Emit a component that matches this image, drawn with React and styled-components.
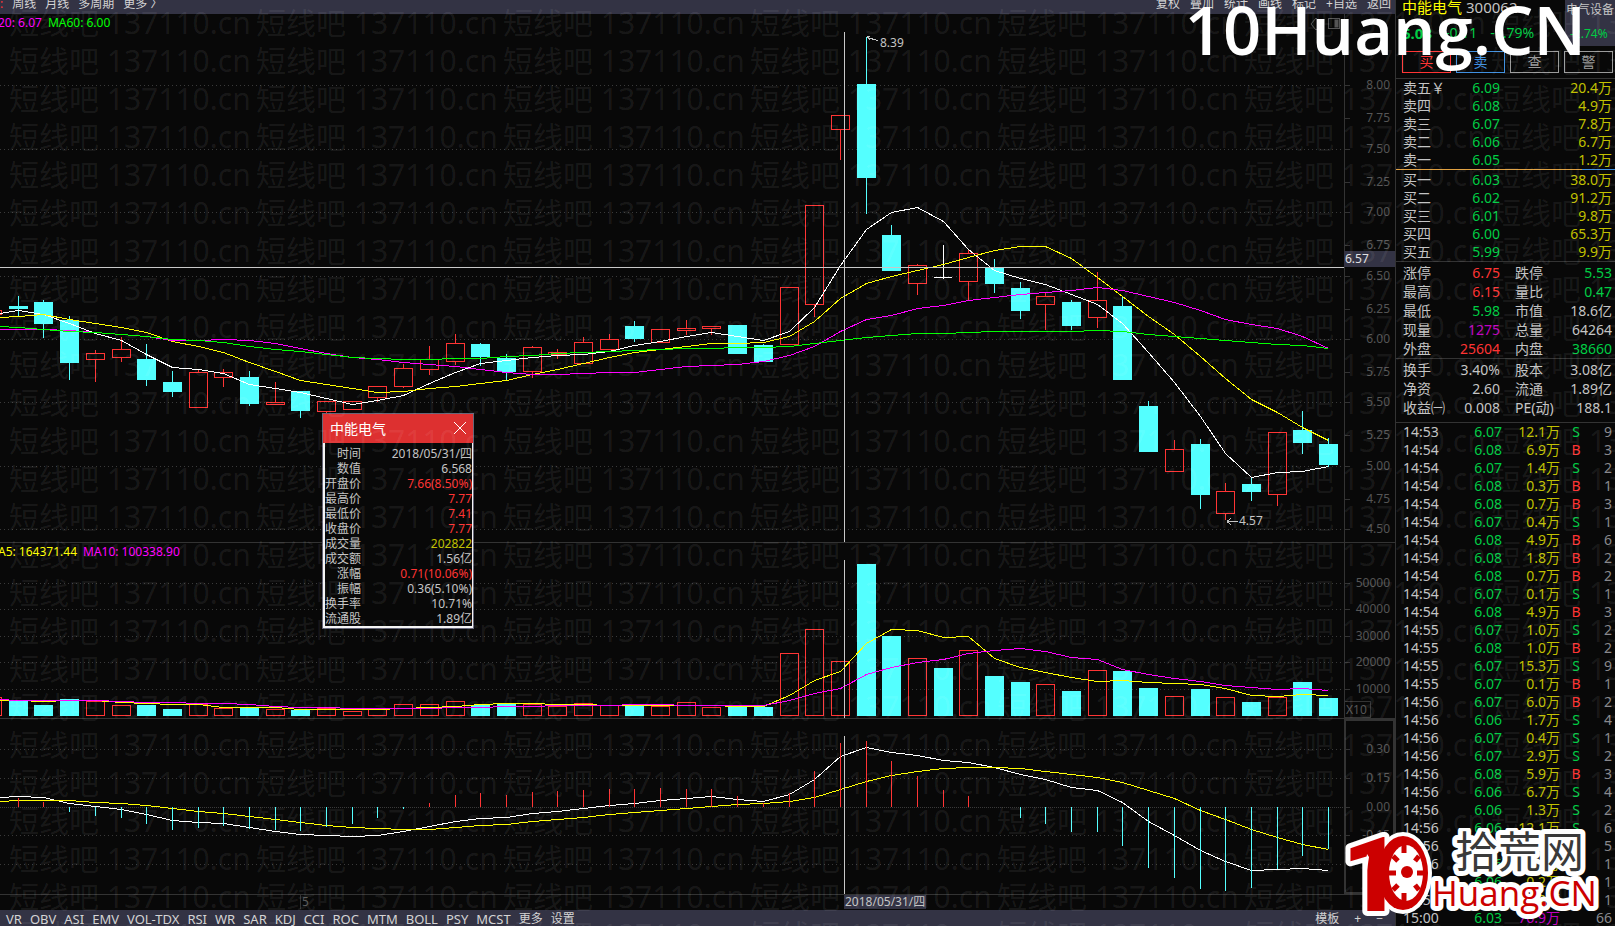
import React from 'react'
import styled, { createGlobalStyle } from 'styled-components'

const GlobalStyle = createGlobalStyle`
  * {
    box-sizing: border-box;
  }

  body {
    margin: 0;
    background: #080808;
    color: #c4c4c4;
    font-family: "Noto Sans", "Noto Sans CJK SC", sans-serif;
    font-size: 12px;
    overflow: hidden;
  }

  button {
    font-family: inherit;
    cursor: pointer;
  }
`;

const UP = '#ff3434';
const DOWN = '#54ffff';
const GREEN = '#00cc44';
const GOLD = '#c0c000';
const LINE = '#333333';

const TONES = {
  up: '#ff3434',
  down: GREEN,
  gold: GOLD,
  purple: '#c000c0',
  dim: '#88888c',
};

// ---------- chart data ----------

// kind, high, body top, body bottom, low
const CANDLES = [
  ['d', 296, 306, 309, 316], ['d', 300, 302, 324, 338], ['d', 316, 320, 363, 380], ['u', 350, 353, 360, 382],
  ['u', 337, 349, 358, 362], ['d', 344, 359, 380, 386], ['d', 371, 382, 392, 397], ['u', 369, 372, 408, 408],
  ['u', 369, 372, 378, 387], ['d', 371, 377, 404, 406], ['u', 382, 402, 405, 405], ['d', 391, 391, 411, 418],
  ['u', 401, 401, 412, 413], ['u', 401, 401, 410, 410], ['u', 386, 386, 398, 402], ['u', 364, 368, 387, 388],
  ['u', 346, 359, 370, 375], ['u', 334, 343, 362, 365], ['d', 343, 344, 357, 366], ['d', 354, 358, 372, 380],
  ['u', 346, 347, 372, 378], ['u', 349, 352, 355, 359], ['u', 337, 342, 364, 364], ['u', 334, 339, 350, 350],
  ['d', 321, 326, 339, 342], ['u', 329, 329, 343, 343], ['u', 320, 328, 331, 335], ['u', 326, 326, 329, 335],
  ['d', 325, 325, 354, 354], ['d', 344, 345, 362, 362], ['u', 287, 287, 345, 345], ['u', 205, 205, 305, 317],
  ['u', 115, 115, 130, 160], ['d', 37, 84, 178, 214], ['d', 225, 235, 271, 271], ['u', 264, 265, 284, 295],
  ['x', 245, 277, 278, 279], ['u', 250, 253, 282, 301], ['d', 259, 268, 284, 293], ['d', 282, 288, 311, 319],
  ['u', 293, 296, 305, 330], ['d', 300, 302, 326, 330], ['u', 272, 300, 318, 328], ['d', 296, 306, 380, 380],
  ['d', 401, 406, 452, 452], ['u', 440, 449, 472, 472], ['d', 439, 444, 495, 509], ['u', 483, 491, 514, 520],
  ['d', 478, 484, 492, 501], ['u', 432, 432, 495, 506], ['d', 411, 430, 443, 454], ['d', 438, 444, 465, 467],
];

const MA5 = [310, 314, 323, 333, 340, 354, 367, 369, 373, 384, 388, 392, 398, 404, 400, 395, 383, 372, 363, 360, 357, 355, 354, 351, 345, 341, 336, 332, 336, 340, 331, 307, 265, 229, 212, 207, 221, 249, 270, 278, 284, 294, 304, 323, 352, 382, 416, 453, 477, 472, 471, 466];
const MA10 = [316, 314, 319, 323, 327, 332, 341, 346, 352, 362, 371, 380, 384, 388, 392, 391, 388, 386, 383, 380, 374, 369, 363, 357, 352, 349, 346, 343, 343, 342, 336, 321, 298, 283, 276, 270, 264, 257, 250, 246, 246, 258, 277, 296, 316, 334, 356, 378, 399, 412, 427, 440];
const MA20 = [329, 329, 330, 332, 334, 336, 340, 340, 339, 340, 343, 348, 353, 357, 359, 362, 364, 366, 369, 372, 374, 374, 373, 372, 372, 369, 366, 365, 364, 361, 355, 346, 331, 319, 315, 308, 305, 300, 297, 294, 292, 290, 287, 290, 296, 302, 310, 319, 324, 328, 336, 348];
const MA60 = [327, 329, 331, 332, 334, 336, 339, 340, 342, 346, 349, 351, 354, 357, 358, 359, 359, 358, 358, 356, 355, 353, 352, 351, 350, 349, 348, 348, 347, 347, 346, 343, 340, 337, 335, 333, 333, 332, 331, 331, 331, 331, 330, 331, 334, 336, 338, 340, 342, 344, 345, 348];

const VOLUMES = [700, 705, 699, 701, 705, 705, 709, 704, 708, 707, 709, 710, 708, 711, 709, 704, 704, 701, 705, 704, 704, 706, 703, 705, 705, 706, 702, 707, 707, 707, 653, 629, 661, 564, 636, 658, 668, 650, 676, 682, 684, 691, 670, 671, 688, 696, 689, 697, 702, 697, 682, 698];
const VOL5 = [700, 701, 700, 700, 702, 703, 704, 704, 707, 707, 707, 709, 709, 709, 709, 708, 707, 706, 704, 703, 703, 704, 704, 705, 705, 705, 705, 705, 706, 706, 695, 680, 671, 643, 629, 630, 637, 636, 658, 667, 672, 677, 681, 680, 682, 683, 684, 688, 695, 696, 694, 695];
const VOL10 = [700, 700, 700, 700, 701, 702, 702, 703, 703, 704, 706, 707, 707, 708, 708, 708, 708, 707, 707, 706, 706, 705, 705, 705, 704, 704, 705, 705, 705, 705, 700, 693, 688, 674, 667, 662, 659, 653, 650, 648, 651, 657, 659, 669, 674, 678, 681, 685, 687, 689, 688, 690];

const MACD_ZERO = 807;
const MACD = [798, 802, 812, 816, 818, 824, 830, 828, 826, 829, 830, 831, 827, 824, 818, 809, 803, 795, 793, 795, 792, 791, 790, 789, 789, 788, 789, 789, 796, 803, 793, 771, 743, 741, 761, 776, 790, 796, 807, 818, 824, 832, 832, 846, 868, 878, 889, 891, 888, 869, 856, 849];
const DIF = [796, 797, 803, 806, 809, 814, 820, 822, 823, 827, 831, 834, 835, 836, 835, 831, 826, 821, 818, 817, 813, 811, 808, 805, 803, 800, 798, 796, 799, 801, 794, 779, 756, 747, 752, 755, 760, 762, 767, 774, 779, 787, 790, 802, 821, 835, 850, 861, 870, 869, 868, 870];
const DEA = [800, 800, 800, 802, 803, 805, 808, 811, 813, 816, 819, 822, 825, 827, 828, 829, 829, 827, 825, 824, 821, 819, 817, 814, 812, 810, 808, 806, 804, 803, 801, 797, 789, 781, 775, 771, 768, 767, 767, 768, 771, 774, 777, 782, 790, 798, 810, 819, 829, 837, 844, 849];

const PRICE = {
  top: 14, height: 529, grid: [85, 149, 212, 276, 339, 402, 466, 529],
  labels: [['8.00', 85], ['7.75', 118], ['7.50', 149], ['7.25', 182], ['7.00', 212], ['6.75', 245], ['6.50', 276], ['6.25', 309], ['6.00', 339], ['5.75', 372], ['5.50', 402], ['5.25', 435], ['5.00', 466], ['4.75', 499], ['4.50', 529]],
};
const VOLUME = {
  top: 543, height: 176, grid: [583, 609, 636, 662, 689],
  labels: [['50000', 583], ['40000', 609], ['30000', 636], ['20000', 662], ['10000', 689]],
};
const OSC = {
  top: 719, height: 176, grid: [749, 778, 835, 864],
  labels: [['0.30', 749], ['0.15', 778], ['0.00', 807], ['-0.15', 835]],
};

const CROSS_X = 844;
const xAt = (i) => Math.floor(18.3 + 25.69 * i);

// ---------- quote data ----------

const SELLS = [['卖五￥', '6.09', '20.4万'], ['卖四', '6.08', '4.9万'], ['卖三', '6.07', '7.8万'], ['卖二', '6.06', '6.7万'], ['卖一', '6.05', '1.2万']];
const BUYS = [['买一', '6.03', '38.0万'], ['买二', '6.02', '91.2万'], ['买三', '6.01', '9.8万'], ['买四', '6.00', '65.3万'], ['买五', '5.99', '9.9万']];

const STATS = [
  ['涨停', '6.75', 'up', '跌停', '5.53', 'down'],
  ['最高', '6.15', 'up', '量比', '0.47', 'down'],
  ['最低', '5.98', 'down', '市值', '18.6亿'],
  ['现量', '1275', 'purple', '总量', '64264'],
  ['外盘', '25604', 'up', '内盘', '38660', 'down'],
];
const FUNDAMENTALS = [
  ['换手', '3.40%', '', '股本', '3.08亿'],
  ['净资', '2.60', '', '流通', '1.89亿'],
  ['收益㈠', '0.008', '', 'PE(动)', '188.1'],
];

const TICKS = [
  ['14:53', '6.07', '12.1', 'S', 9], ['14:54', '6.08', '6.9', 'B', 3], ['14:54', '6.07', '1.4', 'S', 2],
  ['14:54', '6.08', '0.3', 'B', 1], ['14:54', '6.08', '0.7', 'B', 3], ['14:54', '6.07', '0.4', 'S', 1],
  ['14:54', '6.08', '4.9', 'B', 6], ['14:54', '6.08', '1.8', 'B', 2], ['14:54', '6.08', '0.7', 'B', 2],
  ['14:54', '6.07', '0.1', 'S', 1], ['14:54', '6.08', '4.9', 'B', 3], ['14:55', '6.07', '1.0', 'S', 2],
  ['14:55', '6.08', '1.0', 'B', 2], ['14:55', '6.07', '15.3', 'S', 9], ['14:55', '6.07', '0.1', 'B', 1],
  ['14:56', '6.07', '6.0', 'B', 2], ['14:56', '6.06', '1.7', 'S', 4], ['14:56', '6.07', '0.4', 'S', 1],
  ['14:56', '6.07', '2.9', 'S', 2], ['14:56', '6.08', '5.9', 'B', 3], ['14:56', '6.06', '6.7', 'S', 4],
  ['14:56', '6.06', '1.3', 'S', 2], ['14:56', '6.06', '12.1', 'S', 6], ['14:56', '6.06', '1.2', 'S', 5],
  ['14:56', '6.06', '0.1', 'S', 1], ['14:56', '6.06', '0.2', 'S', 1], ['14:56', '6.06', '0.2', 'S', 1],
  ['15:00', '6.03', '76.9', '', 66],
];

const DETAILS = [
  ['时间', '2018/05/31/四'], ['数值', '6.568'], ['开盘价', '7.66(8.50%)', 'up'], ['最高价', '7.77', 'up'],
  ['最低价', '7.41', 'up'], ['收盘价', '7.77', 'up'], ['成交量', '202822', 'gold'], ['成交额', '1.56亿'],
  ['涨幅', '0.71(10.06%)', 'up'], ['振幅', '0.36(5.10%)'], ['换手率', '10.71%'], ['流通股', '1.89亿'],
];

const INDICATORS = ['VR', 'OBV', 'ASI', 'EMV', 'VOL-TDX', 'RSI', 'WR', 'SAR', 'KDJ', 'CCI', 'ROC', 'MTM', 'BOLL', 'PSY', 'MCST'];

// ---------- layout ----------

const Screen = styled.div`
  position: relative;
  display: grid;
  grid-template-columns: minmax(0, 1fr) 220px;
  height: 100vh;
  overflow: hidden;
`;

const ChartSide = styled.main`
  position: relative;
  display: grid;
  grid-template-rows: 14px minmax(0, 529fr) minmax(0, 176fr) minmax(0, 176fr) 15px 16px;
`;

const Bar = styled.nav`
  display: flex;
  justify-content: space-between;
  background: #333344;
  padding: ${(p) => (p.$top ? '0 4px 0 0' : '0 12px 0 6px')};
`;

const BarGroup = styled.div`
  display: flex;
  gap: ${(p) => p.$gap || 8}px;
`;

const BarButton = styled.button`
  background: transparent;
  border: none;
  padding: 0;
  font-size: ${(p) => (p.$latin ? 13 : 12)}px;
  line-height: ${(p) => (p.$top ? 8 : 18)}px;
  height: ${(p) => (p.$top ? 8 : 18)}px;
  color: ${(p) => (p.$active ? UP : '#d4d4d4')};
  white-space: nowrap;
`;

const Panel = styled.section`
  position: relative;
  display: grid;
  grid-template-columns: minmax(0, 1fr) 51px;
  border-bottom: 1px solid ${LINE};
`;

const Plot = styled.svg`
  display: block;
  width: 100%;
  height: 100%;
  shape-rendering: crispEdges;
`;

const Axis = styled.div`
  position: relative;
  box-shadow: ${(p) => (p.$boxed ? `inset 0 0 0 2px ${LINE}` : `inset 1px 0 0 ${LINE}`)};
`;

const AxisLabel = styled.span`
  position: absolute;
  right: 5px;
  transform: translateY(-50%);
  line-height: 16px;
  color: #555555;
`;

const AxisTick = styled.span`
  position: absolute;
  left: 1px;
  width: 5px;
  border-top: 1px solid ${LINE};
`;

const Unit = styled.span`
  position: absolute;
  left: 0;
  bottom: 0;
  width: 27px;
  border: 1px solid ${LINE};
  border-left: none;
  line-height: 15px;
  padding-left: 2px;
  color: #555555;
`;

const Legend = styled.div`
  position: absolute;
  top: 0;
  left: -2px;
  display: flex;
  gap: 6px;
  line-height: 17px;
`;

const LegendItem = styled.span`
  color: ${(p) => p.$color};
`;

const Callout = styled.span`
  position: absolute;
  line-height: 16px;
  transform: translateY(-50%);
`;

const CrossPrice = styled.span`
  position: absolute;
  left: 0;
  right: 0;
  transform: translateY(-100%);
  background: #333344;
  padding-left: 1px;
  line-height: 16px;
  color: #e0e0e0;
`;

const DateAxis = styled.div`
  position: relative;
  margin-right: 51px;
`;

const DateMark = styled.span`
  position: absolute;
  top: 0;
  border-left: 1px solid ${LINE};
  padding-left: 1px;
  line-height: 14px;
  color: #555555;
`;

const CrossDate = styled.span`
  position: absolute;
  top: 0;
  padding: 0 1px;
  background: #333344;
  line-height: 14px;
`;

const ToolIcons = styled.svg`
  position: absolute;
  top: 3px;
  right: 53px;
`;

// ---------- floating detail window ----------

const Popup = styled.aside`
  position: absolute;
  left: 322px;
  top: 413px;
  width: 152px;
  border: 1px solid #666678;
  background: #080808;
`;

const PopupHead = styled.header`
  display: flex;
  align-items: center;
  justify-content: space-between;
  height: 29px;
  padding: 0 7px 2px;
  background: #dd3030;
  color: #ffffff;
  font-size: 14px;
`;

const CloseButton = styled.button`
  display: flex;
  background: transparent;
  border: none;
  padding: 0;
`;

const DetailTable = styled.table`
  width: 100%;
  border-spacing: 0;
  border: 2px solid #f4f4f4;
  border-width: 0 1px 2px 2px;
  padding-top: 3px;

  th, td {
    height: 15px;
    padding: 0;
    line-height: 15px;
    text-align: right;
    font-weight: 400;
    white-space: nowrap;
  }

  th {
    width: 36px;
  }
`;

const Value = styled.td`
  color: ${(p) => TONES[p.$tone] || '#c4c4c4'};
`;

// ---------- quote panel ----------

const Quote = styled.aside`
  display: flex;
  flex-direction: column;
  min-height: 0;
  border-left: 1px solid ${LINE};
  font-size: 14px;
`;

const QuoteHead = styled.header`
  display: flex;
  justify-content: space-between;
  height: 46px;
  padding-left: 6px;
  white-space: nowrap;
`;

const NameRow = styled.div`
  display: flex;
  gap: 4px;
  font-size: 15px;
  line-height: 14px;
  height: 24px;
`;

const Name = styled.span`
  color: #ffff00;
`;

const PriceRow = styled.div`
  display: flex;
  gap: 13px;
  line-height: 18px;
  color: ${GREEN};
`;

const Last = styled.strong`
  font-size: 15px;
`;

const Sector = styled.div`
  width: 50px;
  padding-left: 1px;
  background: #333344;
  font-size: 12px;
  line-height: 20px;
`;

const SectorChange = styled.div`
  padding: 4px 4px 0;
  color: ${GREEN};
`;

const Actions = styled.div`
  display: grid;
  grid-template-columns: repeat(4, 1fr);
  gap: 5px;
  padding: 5px 2px 5px 6px;
  border-bottom: 1px solid ${LINE};
`;

const Action = styled.button`
  height: 22px;
  padding: 0;
  background: transparent;
  border: 1px solid ${(p) => p.$color};
  color: ${(p) => p.$color};
  font-size: 14px;
  line-height: 20px;
`;

const Split = styled.div`
  flex: none;
  height: 1px;
  margin-bottom: 1px;
  background: linear-gradient(to right, #e0a040 85%, #4090e0 85%);
`;

const Block = styled.div`
  flex: ${(p) => (p.$fill ? '1 1 0' : 'none')};
  min-height: 0;
  overflow: hidden;
  padding: 0 3px 0 7px;
  border-bottom: ${(p) => (p.$rule ? `1px solid ${LINE}` : 'none')};
`;

const StatBlock = styled(Block)`
  padding-top: 1px;
  padding-bottom: ${(p) => (p.$last ? 5 : 0)}px;
`;

const DataTable = styled.table`
  width: 100%;
  table-layout: fixed;
  border-spacing: 0;

  th, td {
    height: ${(p) => p.$row}px;
    line-height: ${(p) => p.$row}px;
    padding: 0;
    font-weight: 400;
    text-align: right;
    white-space: nowrap;
  }

  th {
    text-align: left;
  }
`;

const SideLabel = styled.th`
  && {
    padding-left: 15px;
  }
`;

const Side = styled.td`
  && {
    text-align: center;
  }
  color: ${(p) => (p.$side === 'B' ? UP : GREEN)};
`;

// ---------- overlays ----------

const Marks = styled.div`
  position: absolute;
  inset: 0;
  overflow: hidden;
  padding: 4px 0 0 9px;
  color: rgba(255, 255, 255, 0.08);
  font-size: 30px;
  line-height: 38px;
  pointer-events: none;
  user-select: none;
`;

const MarkRow = styled.div`
  display: flex;
`;

const Mark = styled.span`
  flex: 0 0 247px;
  white-space: nowrap;
`;

const SiteName = styled.div`
  position: absolute;
  top: -16px;
  right: 29px;
  color: #ffffff;
  font-family: "Open Sans", sans-serif;
  font-size: 67px;
  font-weight: 600;
  line-height: 90px;
  pointer-events: none;
`;

const SiteLogo = styled.svg`
  position: absolute;
  right: 14px;
  bottom: 2px;
  pointer-events: none;
`;

const Curve = ({ data, color, start }) => (
  <polyline
    fill="none"
    stroke={color}
    points={[`0,${start + 0.5}`, ...data.map((y, i) => `${xAt(i) + 0.5},${y + 0.5}`)].join(' ')}
  />
);

const Grid = ({ rows }) => rows.map((y) => (
  <line key={y} x1="0" x2="1344" y1={y + 0.5} y2={y + 0.5} stroke="#3a3a3a" strokeDasharray="1 3" />
));

const Candle = ({ item, x }) => {
  const [kind, high, top, bottom, low] = item;
  if (kind === 'x') {
    return (
      <g fill="#ffffff">
        <rect x={x} y={high} width="1" height={low - high} />
        <rect x={x - 9} y={top} width="18" height="1" />
      </g>
    );
  }
  if (kind === 'd') {
    return (
      <g fill={DOWN}>
        <rect x={x} y={high} width="1" height={low - high} />
        <rect x={x - 9} y={top} width="19" height={bottom - top} />
      </g>
    );
  }
  return (
    <g fill={UP}>
      <rect x={x} y={high} width="1" height={top - high} />
      <rect x={x} y={bottom} width="1" height={low - bottom} />
      <rect x={x - 8.5} y={top + 0.5} width="18" height={bottom - top - 1} fill="none" stroke={UP} />
    </g>
  );
};

const percentOf = (panel, y) => `${((y - panel.top) / (panel.height - 1)) * 100}%`;

const AxisLabels = ({ panel }) => panel.labels.map(([text, y]) => (
  <React.Fragment key={text}>
    <AxisTick style={{ top: percentOf(panel, y) }} />
    <AxisLabel style={{ top: percentOf(panel, y) }}>{text}</AxisLabel>
  </React.Fragment>
));

const PricePanel = () => (
  <Panel>
    <Plot viewBox="0 14 1344 528" preserveAspectRatio="none">
      <Grid rows={PRICE.grid} />
      <rect x="-16.5" y="310.5" width="18" height="4" fill="none" stroke={UP} />
      {CANDLES.map((item, i) => <Candle key={i} item={item} x={xAt(i)} />)}
      <Curve data={MA5} color="#ffffff" start={313} />
      <Curve data={MA10} color="#ffff00" start={317} />
      <Curve data={MA20} color="#ff00ff" start={329} />
      <Curve data={MA60} color="#00ff00" start={326} />
      <path d="M867 37.5L878 40.5M867 36.5h3M867 37l3 3M1227 521.5h11M1227 521.5l4-3M1227 521.5l4 3" stroke="#c4c4c4" fill="none" />
      <rect x="0" y="267" width="1344" height="1" fill="#c8c8c8" />
      <rect x={CROSS_X} y="32" width="1" height="510" fill="#c8c8c8" />
    </Plot>
    <Axis>
      <AxisLabels panel={PRICE} />
      <CrossPrice style={{ top: percentOf(PRICE, 267) }}>6.57</CrossPrice>
    </Axis>
    <Legend>
      <LegendItem $color="#ff00ff">20: 6.07</LegendItem>
      <LegendItem $color="#00ff00">MA60: 6.00</LegendItem>
    </Legend>
    <Callout style={{ left: `${(880 / 1395) * 100}%`, top: percentOf(PRICE, 43) }}>8.39</Callout>
    <Callout style={{ left: `${(1239 / 1395) * 100}%`, top: percentOf(PRICE, 521) }}>4.57</Callout>
    <ToolIcons width="32" height="14" fill="none" stroke="#555555">
      <path d="M6 1L1 7l5 6M6 1l4 4M6 13l4-4" />
      <rect x="18.5" y="1.5" width="11" height="10" />
      <rect x="25" y="3" width="3" height="7" fill="#555555" />
    </ToolIcons>
  </Panel>
);

const VolumePanel = () => (
  <Panel>
    <Plot viewBox="0 543 1344 175" preserveAspectRatio="none">
      <Grid rows={VOLUME.grid} />
      <rect x="-16.5" y="697.5" width="18" height="18" fill="none" stroke={UP} />
      {VOLUMES.map((y, i) => {
        const solid = CANDLES[i][0] !== 'u';
        return solid
          ? <rect key={i} x={xAt(i) - 9} y={y} width="19" height={716 - y} fill={DOWN} />
          : <rect key={i} x={xAt(i) - 8.5} y={y + 0.5} width="18" height={715 - y} fill="none" stroke={UP} />;
      })}
      <Curve data={VOL5} color="#ffff00" start={700} />
      <Curve data={VOL10} color="#ff00ff" start={699} />
      <rect x={CROSS_X} y="560" width="1" height="158" fill="#c8c8c8" />
    </Plot>
    <Axis>
      <AxisLabels panel={VOLUME} />
      <Unit>X10</Unit>
    </Axis>
    <Legend>
      <LegendItem $color="#ffff00">A5: 164371.44</LegendItem>
      <LegendItem $color="#ff00ff">MA10: 100338.90</LegendItem>
    </Legend>
  </Panel>
);

const OscPanel = () => (
  <Panel>
    <Plot viewBox="0 719 1344 175" preserveAspectRatio="none">
      <Grid rows={OSC.grid} />
      <line x1="0" x2="1344" y1="807.5" y2="807.5" stroke="#3a3a3a" strokeDasharray="1 1" />
      <Curve data={DIF} color="#ffffff" start={797} />
      <Curve data={DEA} color="#ffff00" start={801} />
      {MACD.map((y, i) => (
        <rect
          key={i}
          x={xAt(i)}
          y={Math.min(y, MACD_ZERO)}
          width="1"
          height={Math.abs(y - MACD_ZERO)}
          fill={y < MACD_ZERO ? UP : DOWN}
        />
      ))}
      <rect x={CROSS_X} y="736" width="1" height="158" fill="#c8c8c8" />
    </Plot>
    <Axis $boxed>
      <AxisLabels panel={OSC} />
    </Axis>
  </Panel>
);

const DetailPopup = () => {
  const [open, setOpen] = React.useState(true);
  if (!open) return null;

  return (
    <Popup>
      <PopupHead>
        中能电气
        <CloseButton aria-label="关闭" onClick={() => setOpen(false)}>
          <svg width="12" height="12" stroke="#ffffff" fill="none"><path d="M0 0l12 12M12 0L0 12" /></svg>
        </CloseButton>
      </PopupHead>
      <DetailTable>
        <tbody>
          {DETAILS.map(([label, value, tone]) => (
            <tr key={label}>
              <th scope="row">{label}</th>
              <Value $tone={tone}>{value}</Value>
            </tr>
          ))}
        </tbody>
      </DetailTable>
    </Popup>
  );
};

const Book = ({ rows }) => (
  <DataTable $row={18}>
    <colgroup><col width="40" /><col width="57" /><col /></colgroup>
    <tbody>
      {rows.map(([label, price, amount]) => (
        <tr key={label}>
          <th scope="row">{label}</th>
          <Value $tone="down">{price}</Value>
          <Value $tone="gold">{amount}</Value>
        </tr>
      ))}
    </tbody>
  </DataTable>
);

const Stats = ({ rows }) => (
  <DataTable $row={19}>
    <colgroup><col width="42" /><col width="55" /><col width="60" /><col /></colgroup>
    <tbody>
      {rows.map(([label, value, tone, label2, value2, tone2]) => (
        <tr key={label}>
          <th scope="row">{label}</th>
          <Value $tone={tone}>{value}</Value>
          <SideLabel scope="row">{label2}</SideLabel>
          <Value $tone={tone2}>{value2}</Value>
        </tr>
      ))}
    </tbody>
  </DataTable>
);

const QuotePanel = () => (
  <Quote>
    <QuoteHead>
      <div>
        <NameRow><Name>中能电气</Name><span>300062</span></NameRow>
        <PriceRow><Last>6.03</Last><span>-0.11</span><span>-1.79%</span></PriceRow>
      </div>
      <Sector>
        电气设备
        <SectorChange>-2.74%</SectorChange>
      </Sector>
    </QuoteHead>
    <Actions>
      <Action $color="#ff3434">买</Action>
      <Action $color="#4090e0">卖</Action>
      <Action $color="#9a9a9a">查</Action>
      <Action $color="#9a9a9a">警</Action>
    </Actions>
    <Block><Book rows={SELLS} /></Block>
    <Split />
    <Block $rule><Book rows={BUYS} /></Block>
    <StatBlock $rule><Stats rows={STATS} /></StatBlock>
    <StatBlock $rule $last><Stats rows={FUNDAMENTALS} /></StatBlock>
    <Block $fill>
      <DataTable $row={18}>
        <colgroup><col width="42" /><col width="57" /><col width="58" /><col width="32" /><col /></colgroup>
        <tbody>
          {TICKS.map(([time, price, amount, side, count], i) => (
            <tr key={i}>
              <th scope="row">{time}</th>
              <Value $tone="down">{price}</Value>
              <Value $tone={side ? 'gold' : 'purple'}>{amount}万</Value>
              <Side $side={side}>{side}</Side>
              <Value $tone="dim">{count}</Value>
            </tr>
          ))}
        </tbody>
      </DataTable>
    </Block>
  </Quote>
);

const Logo = () => (
  <SiteLogo width="256" height="96" viewBox="1344 828 256 96" strokeLinejoin="round">
    <g fill="#ffffff" stroke="#ffffff" strokeWidth="10">
      <text x="1341" y="911" fontFamily="Roboto" fontWeight="900" fontSize="104">1</text>
      <ellipse cx="1402" cy="873" rx="24" ry="36" />
      <text x="1454" y="868" fontFamily="Noto Sans CJK SC" fontSize="43">拾荒网</text>
      <text x="1431" y="906" fontFamily="Open Sans" fontSize="35">Huang.CN</text>
    </g>
    <text x="1341" y="911" fontFamily="Roboto" fontWeight="900" fontSize="104" fill="#cc0000">1</text>
    <path d="M1366 854l-3 20 2 3 3-20z" fill="#ffffff" />
    <ellipse cx="1402" cy="873" rx="25" ry="37" fill="#cc0000" />
    <ellipse cx="1405" cy="873" rx="17" ry="28" fill="#ffffff" />
    <g stroke="#cc0000" strokeWidth="5">
      <path d="M1403 844v9M1403 902v-9M1388 873h7M1423 873h-7M1392 856l5 5M1418 856l-4 5M1392 890l5-5M1418 890l-4-5" />
    </g>
    <circle cx="1406" cy="872" r="6" fill="#cc0000" />
    <text x="1454" y="868" fontFamily="Noto Sans CJK SC" fontSize="43" fill="#3a3a3a">拾荒网</text>
    <text x="1431" y="906" fontFamily="Open Sans" fontSize="35" fontWeight="500" fill="#cc0000">Huang.CN</text>
  </SiteLogo>
);

const App = () => (
  <>
    <GlobalStyle />
    <Screen>
      <ChartSide>
        <Bar $top>
          <BarGroup $gap={9}>
            <BarButton $top $active>:</BarButton>
            {['周线', '月线', '多周期', '更多 〉'].map((t) => <BarButton $top key={t}>{t}</BarButton>)}
          </BarGroup>
          <BarGroup $gap={10}>
            {['复权', '叠加', '统计', '画线', '标记', '+自选', '返回'].map((t) => <BarButton $top key={t}>{t}</BarButton>)}
          </BarGroup>
        </Bar>
        <PricePanel />
        <VolumePanel />
        <OscPanel />
        <DateAxis>
          <DateMark style={{ left: `${(300 / 1344) * 100}%` }}>5</DateMark>
          <CrossDate style={{ left: `${(CROSS_X / 1344) * 100}%` }}>2018/05/31/四</CrossDate>
        </DateAxis>
        <Bar>
          <BarGroup>
            {INDICATORS.map((t) => <BarButton $latin key={t}>{t}</BarButton>)}
            <BarButton>更多</BarButton>
            <BarButton>设置</BarButton>
          </BarGroup>
          <BarGroup $gap={15}>
            <BarButton>模板</BarButton>
            <BarButton>+</BarButton>
            <BarButton>−</BarButton>
          </BarGroup>
        </Bar>
        <DetailPopup />
      </ChartSide>
      <QuotePanel />
      <Marks aria-hidden="true">
        {Array.from({ length: 25 }, (_, r) => (
          <MarkRow key={r}>
            {Array.from({ length: 7 }, (_, c) => <Mark key={c}>短线吧 137110.cn</Mark>)}
          </MarkRow>
        ))}
      </Marks>
      <SiteName>10Huang.CN</SiteName>
      <Logo />
    </Screen>
  </>
);

export default App;
